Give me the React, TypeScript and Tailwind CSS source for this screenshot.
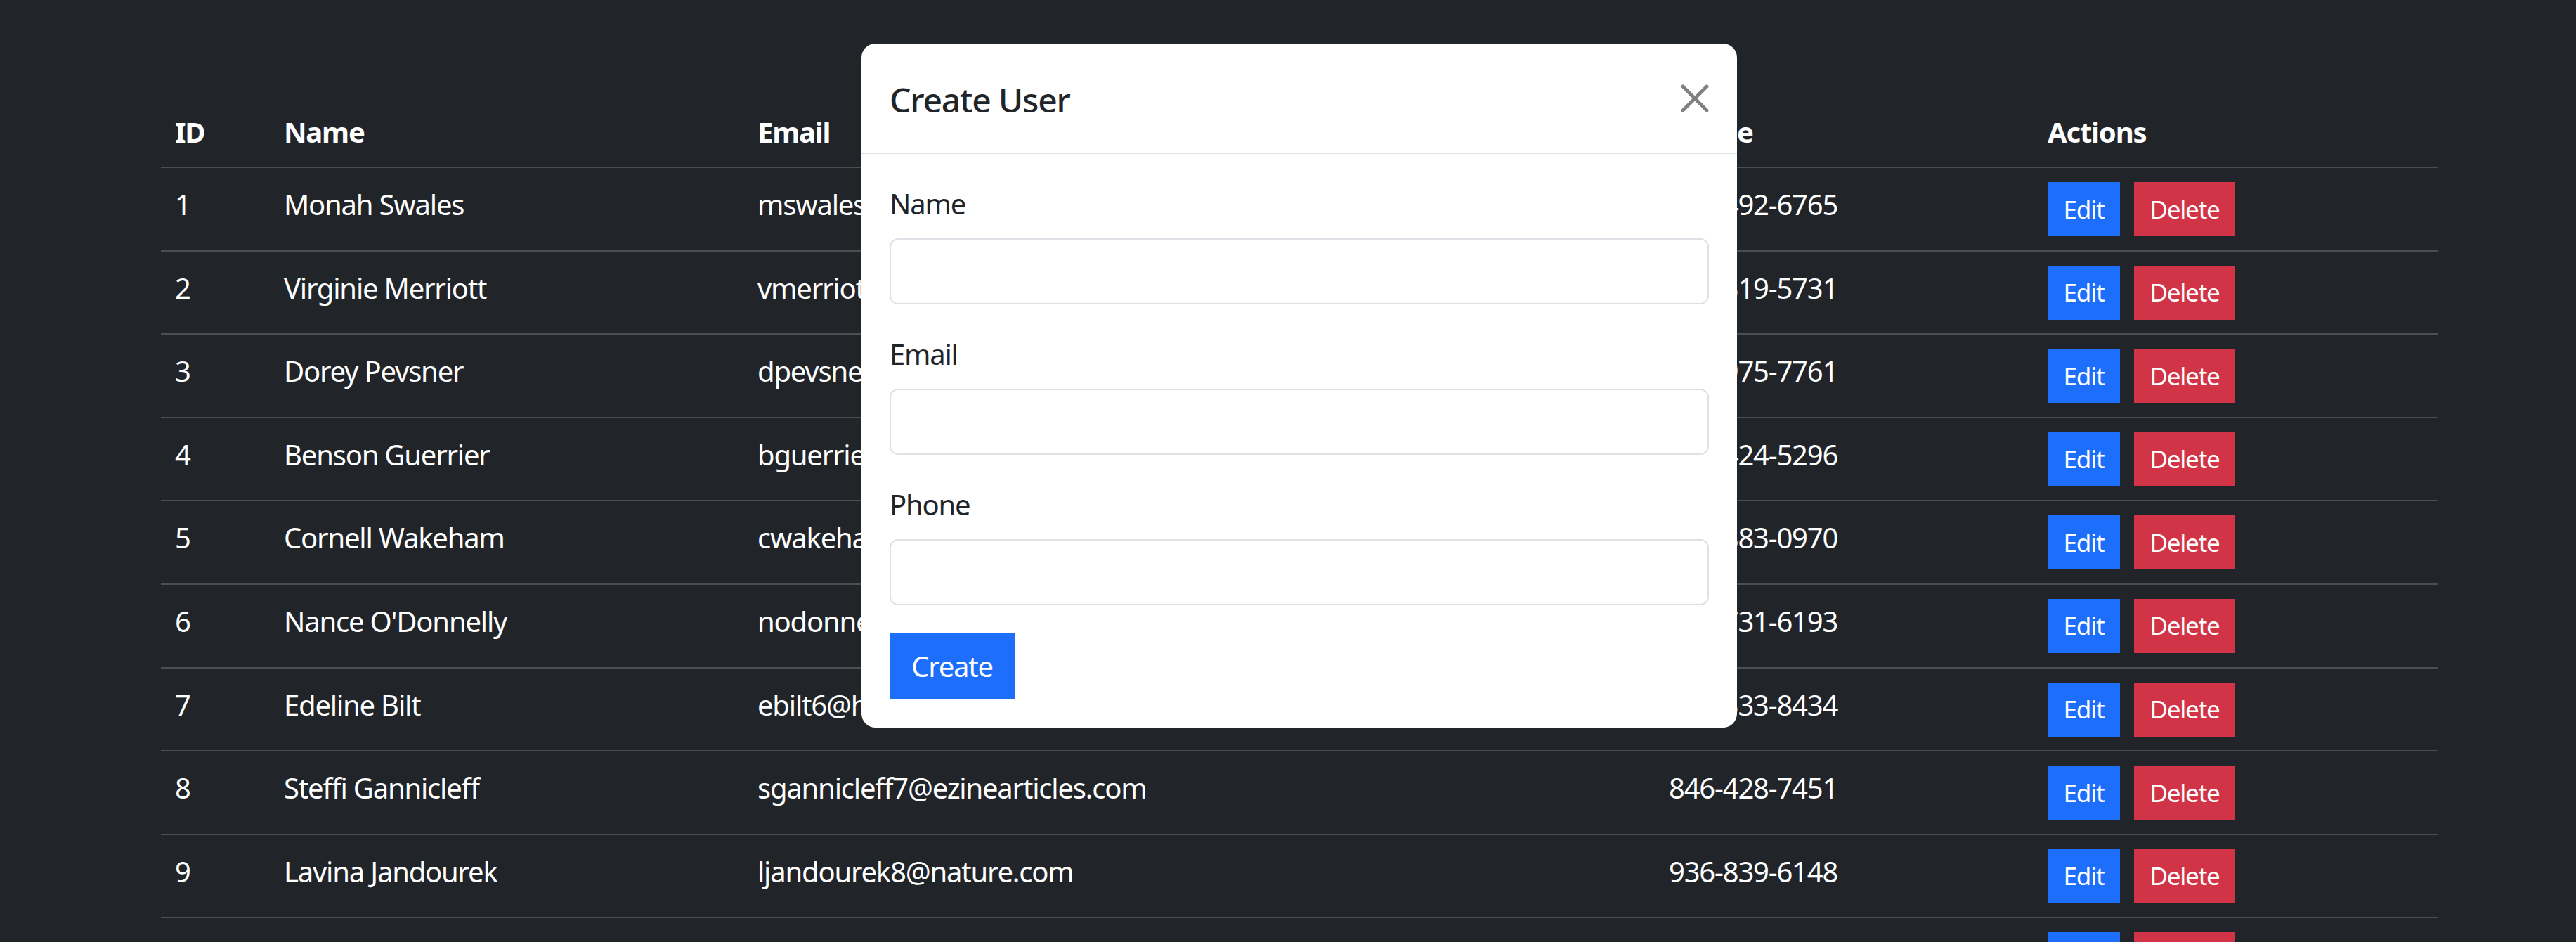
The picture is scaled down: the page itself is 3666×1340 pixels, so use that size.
const users = [
  { id: 1, name: 'Monah Swales', email: 'mswales0@businessweek.com', phone: '417-492-6765' },
  { id: 2, name: 'Virginie Merriott', email: 'vmerriott1@hostgator.com', phone: '662-319-5731' },
  { id: 3, name: 'Dorey Pevsner', email: 'dpevsner2@google.co.uk', phone: '318-975-7761' },
  { id: 4, name: 'Benson Guerrier', email: 'bguerrier3@wufoo.com', phone: '219-424-5296' },
  { id: 5, name: 'Cornell Wakeham', email: 'cwakeham4@ucoz.ru', phone: '504-883-0970' },
  { id: 6, name: "Nance O'Donnelly", email: 'nodonnelly5@dion.ne.jp', phone: '713-731-6193' },
  { id: 7, name: 'Edeline Bilt', email: 'ebilt6@hibu.com', phone: '915-333-8434' },
  { id: 8, name: 'Steffi Gannicleff', email: 'sgannicleff7@ezinearticles.com', phone: '846-428-7451' },
  { id: 9, name: 'Lavina Jandourek', email: 'ljandourek8@nature.com', phone: '936-839-6148' },
  { id: 10, name: 'Kalie Rawsthorn', email: 'krawsthorn9@cnet.com', phone: '702-116-3327' },
]

const cols = 'grid grid-cols-[155px_674px_1297px_539px_576px]'

function Field({ label }: { label: string }) {
  return (
    <div className="mb-[40px]">
      <label className="mb-[20px] block pt-[2px] leading-[58px]">{label}</label>
      <input
        type="text"
        className="block h-[94px] w-full rounded-[12px] border-2 border-[#dee2e6] bg-white px-[30px] outline-none"
      />
    </div>
  )
}

export default function App() {
  return (
    <div className="relative h-[1340px] w-full overflow-hidden bg-[#212529] font-['Noto_Sans',sans-serif] text-[40px] tracking-[-1.2px] text-white">
      <div className="ml-[229px] mt-[137px] w-[3241px]">
        <div className={`${cols} border-b-2 border-[#4b4f53] font-bold leading-[60px]`}>
          {['ID', 'Name', 'Email', 'Phone', 'Actions'].map(h => (
            <div key={h} className="px-[20px] pb-[20px] pt-[21px] leading-[59px]">{h}</div>
          ))}
        </div>
        {users.map(u => (
          <div key={u.id} className={`${cols} h-[118.6px] border-b-2 border-[#4b4f53] leading-[60px]`}>
            <div className="px-[20px] pt-[22px]">{u.id}</div>
            <div className="px-[20px] pt-[22px]">{u.name}</div>
            <div className="px-[20px] pt-[22px]">{u.email}</div>
            <div className="px-[20px] pt-[22px]">{u.phone}</div>
            <div className="flex gap-[20px] px-[20px] pt-[20px]">
              <button className="h-[77px] w-[103px] bg-[#1c6efb] text-[35px] leading-[52px] text-white">Edit</button>
              <button className="h-[77px] w-[144px] bg-[#d13447] text-[35px] leading-[52px] text-white">Delete</button>
            </div>
          </div>
        ))}
      </div>

      <div className="absolute left-[1226px] top-[62px] w-[1246px] rounded-[20px] bg-white text-[#212529]">
        <div className="flex h-[157px] items-center justify-between border-b-2 border-[#dee2e6] px-[40px]">
          <h5 className="pt-[4px] text-[48px] font-medium leading-[58px]">Create User</h5>
          <svg width="40" height="40" viewBox="0 0 40 40" className="text-[#808080]">
            <path d="M3 3L37 37M37 3L3 37" stroke="currentColor" strokeWidth="5" strokeLinecap="round" />
          </svg>
        </div>
        <div className="px-[40px] pb-[40px] pt-[40px]">
          <Field label="Name" />
          <Field label="Email" />
          <Field label="Phone" />
          <button className="h-[94px] w-[178px] bg-[#1c6efb] text-[40px] leading-[60px] text-white">Create</button>
        </div>
      </div>
    </div>
  )
}
